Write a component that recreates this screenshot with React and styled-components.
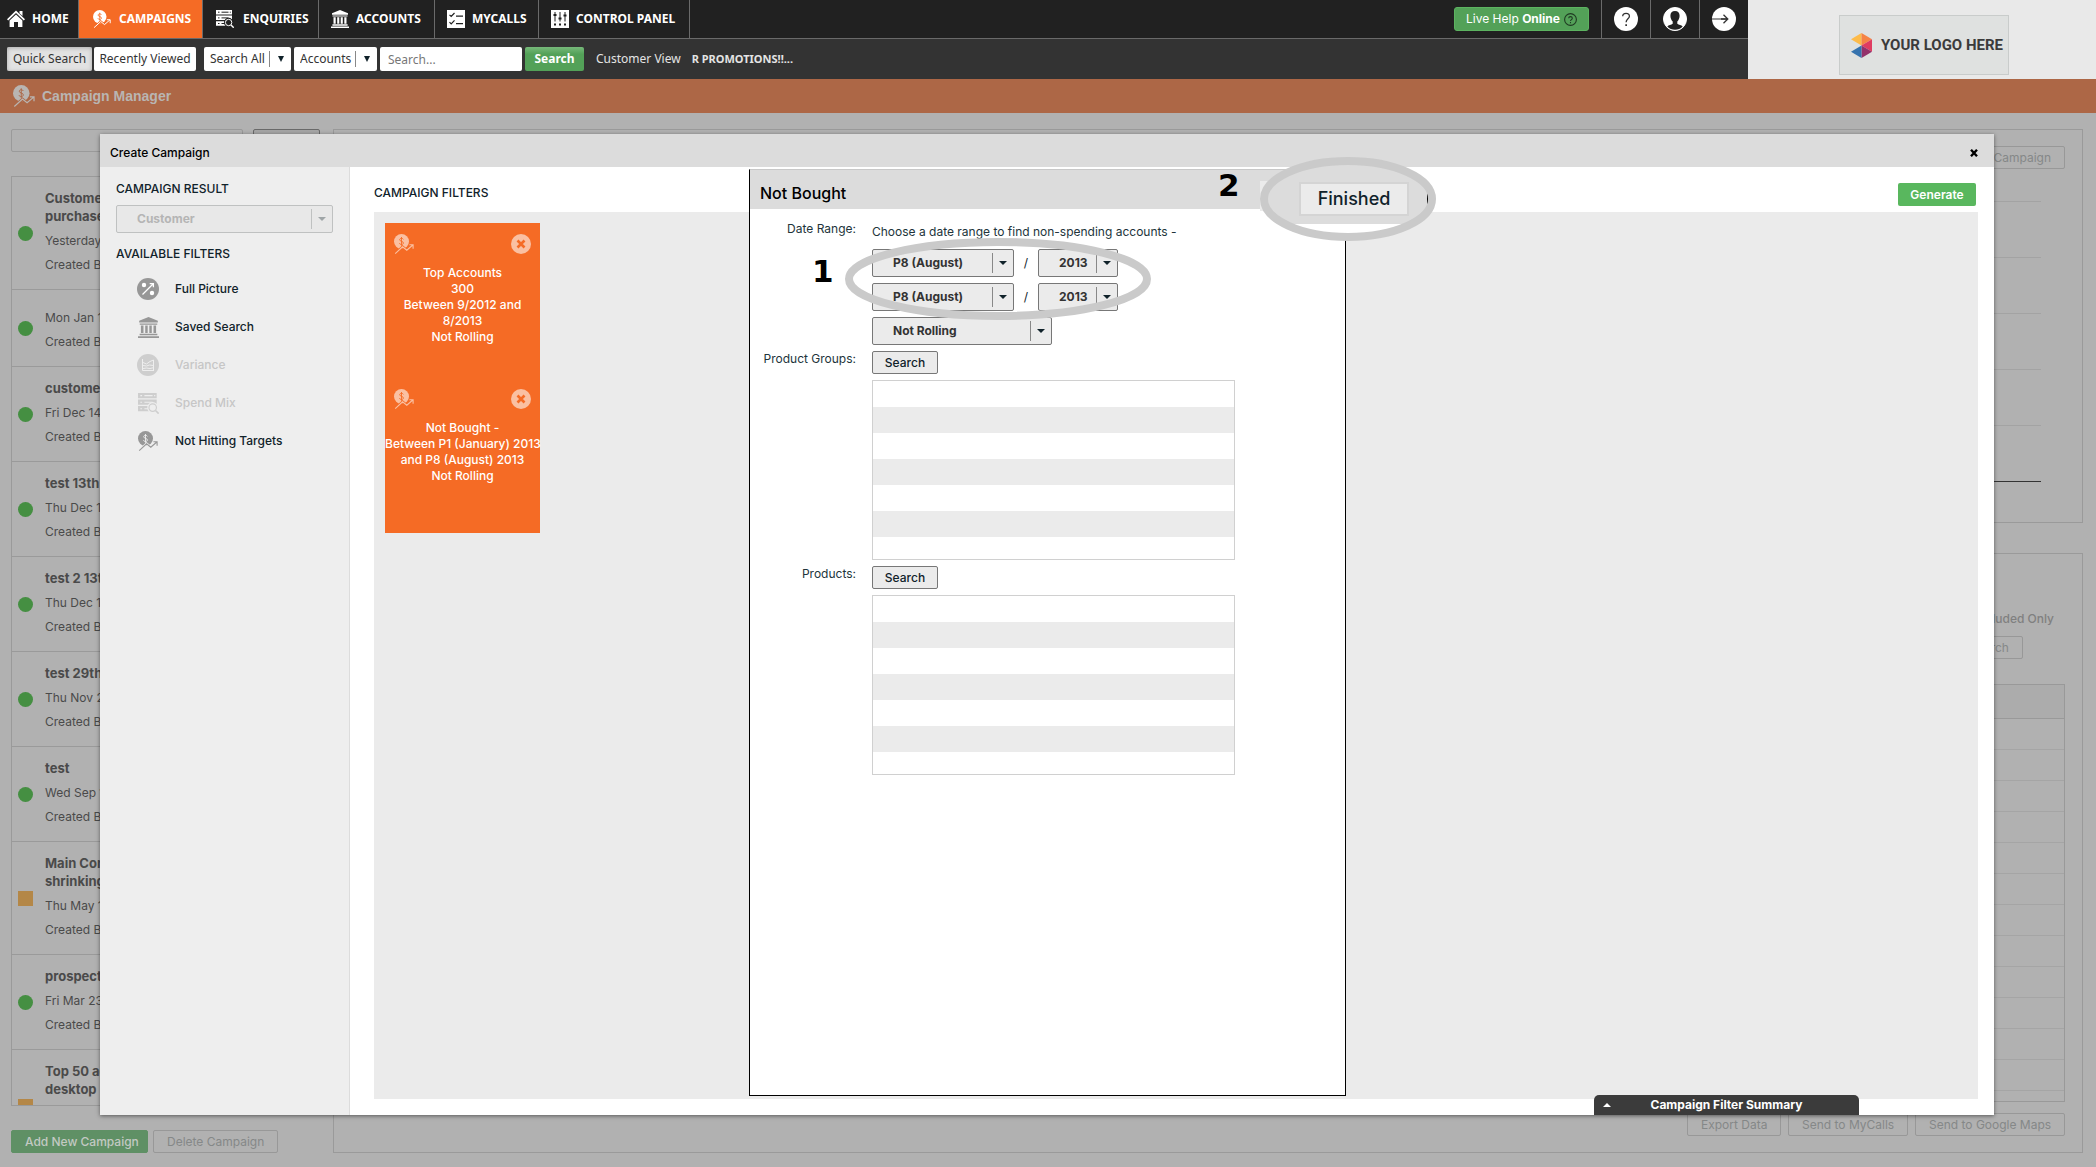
import React from "react";
import styled, { createGlobalStyle, css } from "styled-components";

const GlobalStyle = createGlobalStyle`
  *, *::before, *::after { box-sizing: border-box; }
  body { margin: 0; background: #b1b1b1; color: #10222a; font: 12px/16px Inter, "Liberation Sans", sans-serif; }
  button, select, input { font: inherit; margin: 0; }
  button { cursor: pointer; }
  svg { flex: none; }
  h1, h2, p, ul { margin: 0; padding: 0; }
  ul { list-style: none; }
`;

const humanist = `"Noto Sans", "Open Sans", sans-serif`;

/* ---------- icons ---------- */

const CoinTrendIcon = ({ size = 20, cut = "#f56b25" }) => (
  <svg width={size} height={size} viewBox="0 0 20 20" aria-hidden="true">
    <circle cx="7.5" cy="7.5" r="7.5" fill="currentColor" />
    <path d="M9.4 5.400C9 4.600 8.300 4.300 7.500 4.300 6.400 4.300 5.700 4.900 5.700 5.700c0 2 3.700 1.200 3.700 3.300 0 .9-.8 1.500-1.900 1.500-1 0-1.800-.4-2.100-1.300M7.500 3v8.800" fill="none" stroke={cut} strokeWidth=".9" />
    <path d="M1.200 19.600 8.600 12.800l4.200 3.400 6-5.200" fill="none" stroke={cut} strokeWidth="2.600" />
    <path d="M1.200 19.600 8.600 12.800l4.200 3.400 6-5.200M15.400 10.800h3.700v3.900" fill="none" stroke="currentColor" strokeWidth="1.100" />
  </svg>
);

const HomeIcon = () => (
  <svg width="18" height="18" viewBox="0 0 18 18" fill="currentColor" aria-hidden="true">
    <path d="M12.500 1h3v5l-3-2.800z" />
    <path d="M9 .5 0 9.300l1.200 1.200L9 3l7.800 7.500L18 9.300z" />
    <path d="M2.600 10.400 9 4.400l6.400 6V17H11v-5H7v5H2.600z" />
  </svg>
);

const ServerSearchIcon = ({ size = 18, cut = "#212121" }) => (
  <svg width={size} height={size} viewBox="0 0 18 18" aria-hidden="true">
    <path d="M0 0h16v4.500H0zM0 5.600h16v4.500H0zM0 11.200h16v4.500H0z" fill="currentColor" />
    <path d="M2 2.200h1.500M2 7.900h1.500M2 13.500h1.500M5.500 2.200h7M5.500 7.900h7M5.500 13.500h4M13.800 2.200h1" stroke={cut} strokeWidth="1" />
    <circle cx="12.600" cy="12.500" r="3.400" fill={cut} stroke={cut} strokeWidth="2.600" />
    <circle cx="12.600" cy="12.500" r="3.200" fill={cut} stroke="currentColor" strokeWidth="1" />
    <path d="m15 15 2.700 2.700" stroke="currentColor" strokeWidth="1.400" />
  </svg>
);

const BankIcon = ({ size = 18 }) => (
  <svg width={size} height={size} viewBox="0 0 18 18" fill="currentColor" aria-hidden="true">
    <path d="M9 0 17 3.200v1.600H1V3.200zM1.500 5.600h15v1h-15zM2.500 7.200h2.200v6.600H2.500zM6.200 7.200h2.100v6.600H6.200zM9.700 7.200h2.100v6.600H9.700zM13.300 7.200h2.200v6.600h-2.200zM1.400 14.300h15.200v1.400H1.400zM0 16.500h18V18H0z" />
  </svg>
);

const ChecklistIcon = () => (
  <svg width="18" height="18" viewBox="0 0 18 18" aria-hidden="true">
    <path d="M0 0h18v18H0z" fill="#fff" />
    <path d="m2.500 4.800 1.700 1.700L7.500 3M2.500 12.200l1.700 1.700 3.300-3.500M9 6.200h7M9 13.600h7" fill="none" stroke="#212121" strokeWidth="1.200" />
  </svg>
);

const SlidersIcon = () => (
  <svg width="18" height="18" viewBox="0 0 18 18" aria-hidden="true">
    <path d="M0 0h18v18H0z" fill="#fff" />
    <path d="M4 2v9.500M9 2v9.500M14 2v9.500" stroke="#212121" strokeWidth="1" />
    <path d="M2.500 5h3M7.500 8.500h3M12.500 5.500h3" stroke="#212121" strokeWidth="2" />
    <path d="M3 13.500h2v2H3zM8 13.500h2v2H8zM13 13.500h2v2h-2z" fill="#212121" />
  </svg>
);

const PercentIcon = () => (
  <svg width="22" height="22" viewBox="0 0 22 22" aria-hidden="true">
    <circle cx="11" cy="11" r="11" fill="currentColor" />
    <circle cx="7" cy="7" r="2.200" fill="#fff" />
    <circle cx="15" cy="15" r="2.200" fill="#fff" />
    <path d="m5.500 16.500 10.500-10.500M12.700 5.600h3.700v3.700" fill="none" stroke="#fff" strokeWidth="1.300" />
  </svg>
);

const VarianceIcon = () => (
  <svg width="22" height="22" viewBox="0 0 22 22" aria-hidden="true">
    <circle cx="11" cy="11" r="11" fill="currentColor" />
    <path d="M5.500 5v11.500H17M6 8.500l3.500 1.500 3.500-2.500 3.500-1.500M6 11.500l3.500.5 3-1 4 .5M6 14.500l3.500-.5 3.500.5 3.500-.8M16.500 6v10" fill="none" stroke="#eee" strokeWidth="1" />
  </svg>
);

const CloseCircleIcon = () => (
  <svg width="20" height="20" viewBox="0 0 20 20" aria-hidden="true">
    <circle cx="10" cy="10" r="10" fill="#fac0a2" />
    <path d="m6.500 6.500 7 7M13.500 6.500l-7 7" stroke="#f56b25" strokeWidth="2.600" />
  </svg>
);

const HelpIcon = () => (
  <svg width="24" height="24" viewBox="0 0 24 24" aria-hidden="true">
    <circle cx="12" cy="12" r="12" fill="#fff" />
    <path d="M8.700 9.300c0-4 6.700-4 6.700 0 0 2.500-3.300 2.600-3.300 6" fill="none" stroke="#333" strokeWidth="1.300" />
    <path d="M11.300 17.200h1.700v1.700h-1.700z" fill="#333" />
  </svg>
);

const UserIcon = () => (
  <svg width="24" height="24" viewBox="0 0 24 24" aria-hidden="true">
    <circle cx="12" cy="12" r="11.500" fill="#fff" stroke="#fff" />
    <path d="M12 4c3 0 4.600 2 4.600 4.700 0 2.300-1 4.600-2.300 5.700v2.300c1.500 1 4 1.300 5.400 2.800A10.800 10.800 0 0 1 12 22.800a10.800 10.800 0 0 1-7.700-3.300c1.400-1.500 3.900-1.800 5.400-2.800v-2.300c-1.300-1.100-2.300-3.400-2.300-5.700C7.400 6 9 4 12 4z" fill="#212121" />
  </svg>
);

const ExitIcon = () => (
  <svg width="24" height="24" viewBox="0 0 24 24" aria-hidden="true">
    <circle cx="12" cy="12" r="12" fill="#fff" />
    <path d="M0 12h14" stroke="#999" strokeWidth="2" />
    <path d="M9 12h6.500M11.500 7.800 15.800 12l-4.300 4.200" fill="none" stroke="#333" strokeWidth="1.300" />
  </svg>
);

const SmallHelpIcon = () => (
  <svg width="13" height="13" viewBox="0 0 13 13" aria-hidden="true">
    <circle cx="6.500" cy="6.500" r="5.900" fill="none" stroke="#1f3a22" strokeWidth="1.100" />
    <path d="M4.700 5.300c0-2.300 3.600-2.300 3.600 0 0 1.300-1.800 1.300-1.800 2.700M6.500 9v1.200" fill="none" stroke="#1f3a22" strokeWidth="1.100" />
  </svg>
);

const HexLogo = () => (
  <svg width="21" height="25" viewBox="0 0 21 25" aria-hidden="true">
    <path d="M10.500 0v12.500L0 6.200z" fill="#fdbb4a" />
    <path d="M10.500 0 21 6.200l-10.500 6.300z" fill="#f58345" />
    <path d="M21 6.200v12.600l-10.500-6.300z" fill="#df3c61" />
    <path d="M21 18.800 10.500 25V12.500z" fill="#93316b" />
    <path d="M10.500 25 0 18.800l10.500-6.300z" fill="#3673ae" />
  </svg>
);

const CrossIcon = () => (
  <svg width="8" height="8" viewBox="0 0 8 8" aria-hidden="true">
    <path d="m1 .8 6 6.400M7 .8 1 7.200" stroke="#000" strokeWidth="2.400" />
  </svg>
);

/* ---------- page frame ---------- */

const Page = styled.div`
  display: flex;
  flex-direction: column;
  height: 100vh;
  min-height: 900px;
  position: relative;
  overflow: hidden;
`;

const TopArea = styled.header`
  display: flex;
  height: 79px;
  flex: none;
`;

const Bars = styled.div`
  flex: 1;
  display: flex;
  flex-direction: column;
  background: #333;
`;

const NavBar = styled.nav`
  display: flex;
  align-items: stretch;
  height: 39px;
  background: #212121;
  border-bottom: 1px solid #6a6a6a;
`;

const NavLink = styled.a`
  display: flex;
  align-items: center;
  gap: ${(p) => p.$gap || 7}px;
  width: ${(p) => p.$width}px;
  padding-left: ${(p) => p.$pad || 12}px;
  border-right: 1px solid #6a6a6a;
  background: ${(p) => (p.$active ? "#f56b25" : "transparent")};
  color: #fff;
  font: 700 12px/16px ${humanist};
  text-decoration: none;
  white-space: nowrap;
`;

const NavEnd = styled.div`
  display: flex;
  align-items: center;
  margin-left: auto;
`;

const LiveHelp = styled.button`
  display: flex;
  align-items: center;
  gap: 4px;
  height: 24px;
  width: 135px;
  margin-right: 12px;
  padding: 0 11px;
  border: 1px solid #5cb360;
  border-radius: 3px;
  background: #53a158;
  color: #fff;
  white-space: nowrap;
`;

const RoundButton = styled.button`
  display: flex;
  align-items: center;
  justify-content: center;
  width: 49px;
  height: 38px;
  padding: 0;
  border: 0;
  border-left: 1px solid #6a6a6a;
  background: none;
`;

const QuickBar = styled.form`
  display: flex;
  align-items: center;
  flex: 1;
  gap: 3px;
  padding-left: 7px;
  font-family: ${humanist};
`;

const QuickTabs = styled.div`
  display: flex;
  gap: 2px;
  margin-right: 5px;
`;

const QuickTab = styled.button`
  width: ${(p) => p.$width}px;
  height: 24px;
  padding: 0;
  border: 0;
  border-radius: 2px;
  background: ${(p) => (p.$active ? "#e2e2e2" : "#fff")};
  box-shadow: ${(p) => (p.$active ? "inset 0 1px 4px #aaa" : "none")};
  color: #333;
`;

const QuickInput = styled.input`
  width: 142px;
  height: 24px;
  padding: 0 8px;
  border: 0;
  border-radius: 2px;
  background: #fff;
  color: #333;
  &::placeholder { color: #777; opacity: 1; }
`;

const QuickSubmit = styled.button`
  width: 59px;
  height: 24px;
  padding: 0;
  border: 0;
  border-radius: 2px;
  background: linear-gradient(#77b97a, #53a158 30%);
  color: #fff;
  font-weight: 700;
`;

const QuickLink = styled.a`
  margin-left: ${(p) => (p.$strong ? 8 : 9)}px;
  color: #e4e4e4;
  font-size: ${(p) => (p.$strong ? 11 : 12)}px;
  font-weight: ${(p) => (p.$strong ? 700 : 400)};
  text-decoration: none;
`;

const LogoArea = styled.div`
  display: flex;
  width: 348px;
  padding: 15px 0 0 91px;
  background: #e9e9e9;
`;

const LogoBox = styled.div`
  display: flex;
  align-items: center;
  gap: 9px;
  width: 170px;
  height: 60px;
  padding-left: 11px;
  border: 1px solid #c9cccb;
  background: #dfe1e0;
  color: #3b3b3b;
  font: 700 15px/24px Roboto, sans-serif;
  white-space: nowrap;
`;

const TitleBar = styled.div`
  display: flex;
  align-items: center;
  gap: 7px;
  flex: none;
  height: 34px;
  padding-left: 13px;
  background: #ad6746;
  color: #b9b5b2;
  h1 { font: 700 14px/16px "Liberation Sans", sans-serif; }
`;

/* ---------- dimmed workspace ---------- */

const Workspace = styled.div`
  flex: 1;
  min-height: 0;
  display: grid;
  grid-template-columns: 309px 1fr;
  gap: 13px;
  padding: 16px 13px 14px 11px;
  color: #4a4a4a;
`;

const Column = styled.div`
  display: flex;
  flex-direction: column;
  min-height: 0;
  gap: ${(p) => p.$gap}px;
`;

const Row = styled.div`
  display: flex;
  flex: none;
  gap: ${(p) => p.$gap}px;
  justify-content: ${(p) => (p.$end ? "flex-end" : "flex-start")};
`;

const DimInput = styled.input`
  width: 232px;
  height: 23px;
  border: 1px solid #9a9a9a;
  border-radius: 2px;
  background: transparent;
`;

const DimButton = styled.button`
  height: 23px;
  width: ${(p) => p.$width}px;
  padding: 0 13px;
  border: 1px solid ${(p) => (p.$dark ? "#6a6a6a" : "#989898")};
  border-radius: 2px;
  background: ${(p) => (p.$dark ? "#a5a5a5" : "transparent")};
  color: #858888;
  text-align: ${(p) => p.$align || "center"};
  white-space: nowrap;
  ${(p) =>
    p.$green &&
    css`
      border-color: #5f9065;
      background: #5f9065;
      color: #c3c9c3;
      font-weight: 500;
    `}
`;

const CampaignList = styled.ul`
  flex: 1;
  min-height: 0;
  overflow: hidden;
  border: 1px solid #9a9a9a;
`;

const Campaign = styled.li`
  display: grid;
  grid-template-columns: 15px 1fr;
  column-gap: 12px;
  align-items: center;
  padding: 12px 6px;
  border-bottom: 1px solid #9a9a9a;
`;

const Status = styled.span`
  width: 15px;
  height: 15px;
  border-radius: ${(p) => (p.$paused ? 0 : "50%")};
  background: ${(p) => (p.$paused ? "#b48747" : "#458f42")};
`;

const CampaignName = styled.h2`
  margin-bottom: 4px;
  font-size: 13px;
  line-height: 18px;
  font-weight: 700;
  white-space: pre-line;
`;

const CampaignLine = styled.p`
  min-height: 24px;
  line-height: 24px;
`;

const Panel = styled.section`
  display: flex;
  flex-direction: column;
  min-height: 0;
  flex: ${(p) => (p.$fill ? 1 : "none")};
  padding: 16px 17px;
  border: 1px solid #9a9a9a;
  align-items: flex-end;
`;

const ChartLines = styled.div`
  width: 100%;
  padding: 32px 24px 24px 0;
`;

const ChartLine = styled.div`
  height: ${(p) => (p.$axis ? 1 : 56)}px;
  border-top: 1px solid ${(p) => (p.$axis ? "#333" : "#a3a3a3")};
`;

const FilterNote = styled.p`
  margin: 41px 11px 9px 0;
  color: #808080;
  font-weight: 500;
`;

const ResultTable = styled.table`
  width: 100%;
  margin-bottom: 1px;
  border-collapse: collapse;
  th { height: 33px; background: #acacac; border-bottom: 1px solid #999; }
  td { height: 31px; padding: 0; border-bottom: 1px solid #a5a5a5; }
`;

const TableFrame = styled.div`
  flex: 1;
  min-height: 0;
  width: 100%;
  margin: 25px 0 11px;
  overflow: hidden;
  border: 1px solid #999;
`;

const SearchLine = styled.div`
  margin-right: 42px;
`;

/* ---------- controls ---------- */

const SelectFrame = styled.span`
  display: inline-grid;
  flex: none;
  width: ${(p) => p.$width}px;
  height: ${(p) => p.$height || 28}px;
  border: ${(p) => (p.$plain ? "0" : `1px solid ${p.$muted ? "#bfc1c1" : "#777"}`)};
  border-radius: 2px;
  background: ${(p) => (p.$plain ? "#fff" : p.$muted ? "#e8e8e8" : "#ebebeb")};
  color: ${(p) => (p.$muted ? "#9fa5a7" : "#10222a")};
  select {
    grid-area: 1 / 1;
    width: 100%;
    height: 100%;
    appearance: none;
    padding: 0 0 0 ${(p) => p.$pad || 20}px;
    border: 0;
    background: none;
    color: ${(p) => (p.$muted ? "#b5b5b5" : "#333")};
    font-weight: ${(p) => (p.$plain ? 400 : 700)};
    opacity: 1;
  }
`;

const SelectArrow = styled.span`
  grid-area: 1 / 1;
  justify-self: end;
  align-self: center;
  display: flex;
  align-items: center;
  justify-content: center;
  width: ${(p) => (p.$plain ? 22 : 21)}px;
  height: ${(p) => (p.$plain ? 16 : 20)}px;
  border-left: 1px solid ${(p) => (p.$muted ? "#bfc1c1" : "#888")};
  pointer-events: none;
  &::after {
    content: "";
    border: ${(p) => (p.$plain ? 3 : 4)}px solid transparent;
    border-top: ${(p) => (p.$plain ? 6 : 4)}px solid currentColor;
    border-bottom: 0;
  }
`;

const Picker = ({ label, value, ...rest }) => (
  <SelectFrame {...rest}>
    <select aria-label={label} defaultValue={value} disabled={rest.$muted}>
      <option>{value}</option>
    </select>
    <SelectArrow $plain={rest.$plain} $muted={rest.$muted} />
  </SelectFrame>
);

/* ---------- dialog ---------- */

const Dialog = styled.section`
  position: absolute;
  inset: 134px 102px 52px 100px;
  display: flex;
  flex-direction: column;
  background: #fff;
  box-shadow: 0 1px 4px rgba(0, 0, 0, 0.5);
`;

const DialogHeader = styled.header`
  display: flex;
  align-items: center;
  justify-content: space-between;
  flex: none;
  height: 33px;
  padding: 5px 16px 0 10px;
  background: #dcdcdc;
  color: #000;
  h2 { font-size: 12px; line-height: 16px; font-weight: 500; }
`;

const CloseButton = styled.button`
  display: flex;
  padding: 0;
  border: 0;
  background: none;
`;

const DialogBody = styled.div`
  flex: 1;
  min-height: 0;
  display: flex;
`;

const Sidebar = styled.aside`
  width: 250px;
  padding: 14px 16px;
  border-right: 1px solid #dcdcdc;
  background: #eee;
`;

const Heading = styled.h2`
  font-size: 12px;
  line-height: 16px;
  font-weight: 500;
`;

const SidebarPicker = styled.div`
  display: flex;
  margin: 8px 0 13px;
`;

const FilterList = styled.ul`
  padding: 8px 0 0 21px;
`;

const FilterButton = styled.button`
  display: grid;
  grid-template-columns: 22px auto;
  column-gap: 16px;
  align-items: center;
  justify-items: center;
  height: 38px;
  padding: 0;
  border: 0;
  background: none;
  color: #10222a;
  font-size: 12px;
  font-weight: 500;
  svg { color: #979797; }
  &:disabled { color: #c6c6c6; }
  &:disabled svg { color: #cecece; }
`;

const Main = styled.div`
  flex: 1;
  display: flex;
  flex-direction: column;
  padding: 16px 16px 16px 24px;
`;

const MainHeader = styled.div`
  display: flex;
  align-items: flex-start;
  justify-content: space-between;
  height: 23px;
  padding-right: 2px;
  margin-bottom: 6px;
  ${Heading} { padding-top: 2px; }
`;

const Generate = styled.button`
  width: 78px;
  height: 23px;
  padding: 0;
  border: 0;
  border-radius: 2px;
  background: #59b75e;
  color: #fff;
  font-weight: 600;
`;

const FilterCanvas = styled.div`
  flex: 1;
  padding: 11px;
  background: #ebebeb;
`;

const FilterCard = styled.article`
  width: 155px;
  height: 155px;
  background: #f56b25;
  color: #fff;
  font-weight: 500;
  text-align: center;
  p { white-space: pre; }
`;

const CardTools = styled.div`
  display: flex;
  justify-content: space-between;
  padding: 11px 9px 11px;
  color: #fac0a2;
`;

const SummaryTab = styled.button`
  position: absolute;
  right: 135px;
  bottom: 0;
  display: grid;
  grid-template-columns: 8px 1fr 8px;
  align-items: center;
  width: 265px;
  height: 20px;
  padding: 0 9px;
  border: 0;
  border-radius: 5px 5px 0 0;
  background: #3b3b3b;
  color: #fff;
  font-weight: 700;
  &::before {
    content: "";
    border: 4px solid transparent;
    border-bottom-color: #fff;
    border-top: 0;
  }
`;

/* ---------- filter editor ---------- */

const Editor = styled.section`
  position: absolute;
  top: 35px;
  bottom: 19px;
  left: calc(50% - 298px);
  width: 597px;
  border: 1px solid #000;
  border-top-color: #c8c8c8;
  background: #fff;
`;

const EditorHeader = styled.header`
  display: flex;
  align-items: center;
  height: 39px;
  padding: 6px 10px 0;
  background: #dcdcdc;
  color: #000;
  h2 { font-size: 16px; line-height: 20px; font-weight: 500; }
`;

const EditorForm = styled.div`
  display: grid;
  grid-template-columns: 106px auto;
  justify-content: start;
  column-gap: 16px;
  row-gap: 6px;
  padding-top: 12px;
`;

const FieldLabel = styled.div`
  text-align: right;
  color: #22343b;
  white-space: nowrap;
`;

const Field = styled.div`
  display: flex;
  flex-direction: column;
  align-items: flex-start;
  gap: 6px;
`;

const Hint = styled.p`
  padding: 3px 0;
  color: #22343b;
  white-space: nowrap;
`;

const PeriodRow = styled.div`
  display: grid;
  grid-template-columns: 142px 24px 80px;
  align-items: center;
  justify-items: center;
`;

const SearchButton = styled.button`
  width: 66px;
  height: 23px;
  padding: 0;
  border: 1px solid #777;
  border-radius: 2px;
  background: #ebebeb;
  color: #10222a;
  font-weight: 500;
`;

const PickedList = styled.ul`
  width: 363px;
  height: 180px;
  border: 1px solid #d0d0d0;
  background: repeating-linear-gradient(#fff 0 26px, #ebebeb 26px 52px);
`;

const StepNumber = styled.span`
  position: absolute;
  left: ${(p) => p.$left}px;
  top: ${(p) => p.$top}px;
  color: #000;
  font: 700 31px/32px "DejaVu Sans", sans-serif;
`;

const Ring = styled.svg`
  position: absolute;
  left: ${(p) => p.$left}px;
  top: ${(p) => p.$top}px;
  pointer-events: none;
`;

const Finished = styled.button`
  position: absolute;
  left: 549px;
  top: 12px;
  width: 110px;
  height: 34px;
  padding: 0;
  border: 2px solid #d4d4d4;
  background: #ebebeb;
  color: #10222a;
  font-size: 18px;
  font-weight: 500;
`;

const navItems = [
  { label: "HOME", icon: <HomeIcon />, width: 79, pad: 7 },
  { label: "CAMPAIGNS", icon: <CoinTrendIcon size={18} />, width: 124, pad: 14, gap: 8, active: true },
  { label: "ENQUIRIES", icon: <ServerSearchIcon />, width: 116, pad: 13, gap: 9 },
  { label: "ACCOUNTS", icon: <BankIcon />, width: 116 },
  { label: "MYCALLS", icon: <ChecklistIcon />, width: 104 },
  { label: "CONTROL PANEL", icon: <SlidersIcon />, width: 151 },
];

const campaigns = [
  { name: "Customers not\npurchased", date: "Yesterday", by: "Created By" },
  { date: "Mon Jan 14", by: "Created By" },
  { name: "customers", date: "Fri Dec 14", by: "Created By" },
  { name: "test 13th", date: "Thu Dec 13", by: "Created By" },
  { name: "test 2 13th", date: "Thu Dec 13", by: "Created By" },
  { name: "test 29th", date: "Thu Nov 29", by: "Created By" },
  { name: "test", date: "Wed Sep 12", by: "Created By" },
  { name: "Main Contact\nshrinking", date: "Thu May 17", by: "Created By", paused: true },
  { name: "prospects", date: "Fri Mar 23", by: "Created By" },
  { name: "Top 50 accounts\ndesktop", paused: true },
];

const filters = [
  { label: "Full Picture", icon: <PercentIcon /> },
  { label: "Saved Search", icon: <BankIcon size={21} /> },
  { label: "Variance", icon: <VarianceIcon />, disabled: true },
  { label: "Spend Mix", icon: <ServerSearchIcon size={21} cut="#eee" />, disabled: true },
  { label: "Not Hitting Targets", icon: <CoinTrendIcon cut="#eee" /> },
];

const cards = [
  "Top Accounts\n300\nBetween 9/2012 and\n8/2013\nNot Rolling",
  "Not Bought -\nBetween P1 (January) 2013\nand P8 (August) 2013\nNot Rolling",
];

const Period = ({ name }) => (
  <PeriodRow>
    <Picker label={`${name} period`} value="P8 (August)" $width={142} />
    <span>/</span>
    <Picker label={`${name} year`} value="2013" $width={80} />
  </PeriodRow>
);

export default function App() {
  return (
    <Page>
      <GlobalStyle />
      <TopArea>
        <Bars>
          <NavBar>
            {navItems.map((n) => (
              <NavLink key={n.label} href="#" $width={n.width} $pad={n.pad} $gap={n.gap} $active={n.active}>
                {n.icon}
                {n.label}
              </NavLink>
            ))}
            <NavEnd>
              <LiveHelp type="button">
                <span>Live Help <b>Online</b></span>
                <SmallHelpIcon />
              </LiveHelp>
              <RoundButton aria-label="Help"><HelpIcon /></RoundButton>
              <RoundButton aria-label="Profile"><UserIcon /></RoundButton>
              <RoundButton aria-label="Log out"><ExitIcon /></RoundButton>
            </NavEnd>
          </NavBar>
          <QuickBar onSubmit={(e) => e.preventDefault()}>
            <QuickTabs>
              <QuickTab type="button" $width={85} $active>Quick Search</QuickTab>
              <QuickTab type="button" $width={102}>Recently Viewed</QuickTab>
            </QuickTabs>
            <Picker label="Search scope" value="Search All" $width={87} $height={24} $pad={6} $plain />
            <Picker label="Record type" value="Accounts" $width={83} $height={24} $pad={6} $plain />
            <QuickInput aria-label="Search text" placeholder="Search..." />
            <QuickSubmit>Search</QuickSubmit>
            <QuickLink href="#">Customer View</QuickLink>
            <QuickLink href="#" $strong>R PROMOTIONS!!...</QuickLink>
          </QuickBar>
        </Bars>
        <LogoArea>
          <LogoBox><HexLogo />YOUR LOGO HERE</LogoBox>
        </LogoArea>
      </TopArea>

      <TitleBar>
        <CoinTrendIcon size={22} cut="#ad6746" />
        <h1>Campaign Manager</h1>
      </TitleBar>

      <Workspace>
        <Column $gap={24}>
          <Row $gap={10}>
            <DimInput aria-label="Find campaign" />
            <DimButton $width={67} $dark aria-label="Find" />
          </Row>
          <CampaignList>
            {campaigns.map((c, i) => (
              <Campaign key={i}>
                <Status $paused={c.paused} />
                <div>
                  <CampaignName>{c.name}</CampaignName>
                  <CampaignLine>{c.date}</CampaignLine>
                  <CampaignLine>{c.by}</CampaignLine>
                </div>
              </Campaign>
            ))}
          </CampaignList>
          <Row $gap={5}>
            <DimButton $width={137} $green>Add New Campaign</DimButton>
            <DimButton $width={125}>Delete Campaign</DimButton>
          </Row>
        </Column>
        <Column $gap={30}>
          <Panel>
            <DimButton $width={130} $align="right">Campaign</DimButton>
            <ChartLines>
              <ChartLine /><ChartLine /><ChartLine /><ChartLine /><ChartLine /><ChartLine $axis />
            </ChartLines>
          </Panel>
          <Panel $fill>
            <FilterNote>Included Only</FilterNote>
            <SearchLine><DimButton $width={68}>Search</DimButton></SearchLine>
            <TableFrame>
              <ResultTable>
                <thead><tr><th aria-label="Results" /></tr></thead>
                <tbody>
                  {Array.from({ length: 13 }, (_, i) => <tr key={i}><td /></tr>)}
                </tbody>
              </ResultTable>
            </TableFrame>
            <Row $gap={7} $end>
              <DimButton $width={94}>Export Data</DimButton>
              <DimButton $width={120}>Send to MyCalls</DimButton>
              <DimButton $width={150}>Send to Google Maps</DimButton>
            </Row>
          </Panel>
        </Column>
      </Workspace>

      <Dialog role="dialog" aria-label="Create Campaign">
        <DialogHeader>
          <h2>Create Campaign</h2>
          <CloseButton aria-label="Close"><CrossIcon /></CloseButton>
        </DialogHeader>
        <DialogBody>
          <Sidebar>
            <Heading>CAMPAIGN RESULT</Heading>
            <SidebarPicker>
              <Picker label="Campaign result" value="Customer" $width={217} $muted />
            </SidebarPicker>
            <Heading>AVAILABLE FILTERS</Heading>
            <FilterList>
              {filters.map((f) => (
                <li key={f.label}>
                  <FilterButton disabled={f.disabled}>{f.icon}<span>{f.label}</span></FilterButton>
                </li>
              ))}
            </FilterList>
          </Sidebar>
          <Main>
            <MainHeader>
              <Heading>CAMPAIGN FILTERS</Heading>
              <Generate>Generate</Generate>
            </MainHeader>
            <FilterCanvas>
              {cards.map((text) => (
                <FilterCard key={text}>
                  <CardTools>
                    <CoinTrendIcon />
                    <CloseButton aria-label="Remove filter"><CloseCircleIcon /></CloseButton>
                  </CardTools>
                  <p>{text}</p>
                </FilterCard>
              ))}
            </FilterCanvas>
          </Main>
        </DialogBody>
        <SummaryTab>Campaign Filter Summary</SummaryTab>

        <Editor>
          <EditorHeader><h2>Not Bought</h2></EditorHeader>
          <EditorForm>
            <FieldLabel>Date Range:</FieldLabel>
            <Field>
              <Hint>Choose a date range to find non-spending accounts -</Hint>
              <Period name="From" />
              <Period name="To" />
              <Picker label="Rolling" value="Not Rolling" $width={180} />
            </Field>
            <FieldLabel>Product Groups:</FieldLabel>
            <Field>
              <SearchButton>Search</SearchButton>
              <PickedList />
            </Field>
            <FieldLabel>Products:</FieldLabel>
            <Field>
              <SearchButton>Search</SearchButton>
              <PickedList />
            </Field>
          </EditorForm>
          <StepNumber $left={62} $top={85}>1</StepNumber>
          <StepNumber $left={468} $top={-1}>2</StepNumber>
          <Ring $left={94} $top={67} width="308" height="84" aria-hidden="true">
            <ellipse cx="154" cy="42" rx="149" ry="37" fill="none" stroke="#cacaca" strokeWidth="8" />
          </Ring>
          <Ring $left={509} $top={-13} width="178" height="84" aria-hidden="true">
            <defs><clipPath id="lens"><ellipse cx="89" cy="42" rx="84" ry="38" /></clipPath></defs>
            <path d="M1 24h20v30H1z" fill="#ebebeb" />
            <g clipPath="url(#lens)">
              <path d="M0 0h178v67H0z" fill="#dcdcdc" />
              <path d="M0 67h178v17H0z" fill="#fff" />
              <path d="M168 36h4v14h-4z" fill="#000" />
            </g>
            <ellipse cx="89" cy="42" rx="84" ry="38" fill="none" stroke="#cacaca" strokeWidth="8" />
          </Ring>
          <Finished>Finished</Finished>
        </Editor>
      </Dialog>
    </Page>
  );
}
